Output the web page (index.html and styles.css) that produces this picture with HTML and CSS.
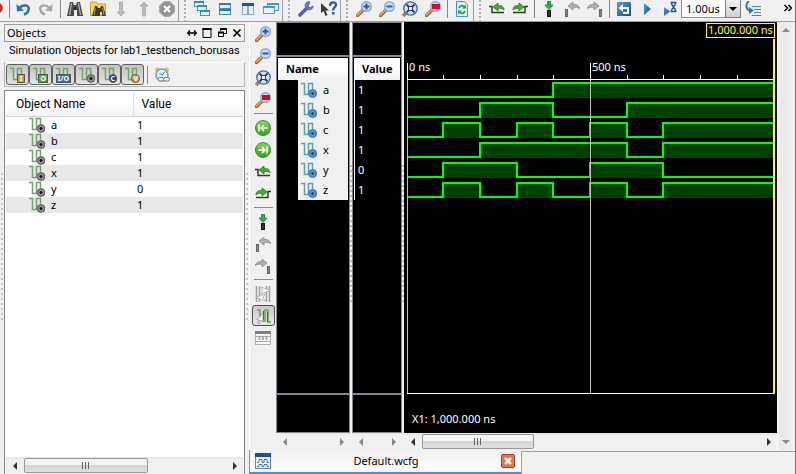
FILE: index.html
```html
<!DOCTYPE html>
<html lang="en">
<head>
<meta charset="utf-8">
<title>Default.wcfg</title>
<link rel="stylesheet" href="styles.css">
</head>
<body>
<svg class="defs" aria-hidden="true">
  <defs>
    <linearGradient id="gGreen" x1="0" y1="0" x2="0" y2="1"><stop offset="0" stop-color="#8ad860"/><stop offset="1" stop-color="#36a01c"/></linearGradient>
    <linearGradient id="gBlue" x1="0" y1="0" x2="1" y2="1"><stop offset="0" stop-color="#5c9ae0"/><stop offset="1" stop-color="#0c489c"/></linearGradient>
  </defs>
  <symbol id="glass" viewBox="0 0 16 16"><path d="M1.500 14.500L7 9" stroke="#a8641c" stroke-width="3.400" stroke-linecap="round"/><path d="M1.500 14L6.500 9" stroke="#e8ae62" stroke-width="1.500" stroke-linecap="round"/><circle cx="10.500" cy="5.500" r="4.800" fill="#c9dafa" stroke="#8aa6e4" stroke-width="1.400"/></symbol>
  <symbol id="zin" viewBox="0 0 16 16"><use href="#glass"/><path d="M7.500 5.500h6M10.500 2.500v6" stroke="#2458a4" stroke-width="1.900"/></symbol>
  <symbol id="zout" viewBox="0 0 16 16"><use href="#glass"/><path d="M7.500 5.500h6" stroke="#2458a4" stroke-width="1.900"/></symbol>
  <symbol id="zfit" viewBox="0 0 16 16"><path d="M1 15L4 12" stroke="#c8781c" stroke-width="3.600"/><circle cx="8.500" cy="7.500" r="6.700" fill="#d4e2fc" stroke="#3c68c0" stroke-width="1.300"/><path d="M4.500 3.500L7 6M12.500 3.500L10 6M4.500 11.500L7 9M12.500 11.500L10 9" stroke="#183c90" stroke-width="1.800"/><rect x="6.500" y="5.500" width="4" height="4" fill="#fff" stroke="#183c90"/></symbol>
  <symbol id="zred" viewBox="0 0 16 16"><use href="#glass"/><rect x="7" y="3" width="8" height="5" fill="#e8001c"/></symbol>
  <symbol id="undo" viewBox="0 0 16 16"><path d="M4 7C10 2 15 5 13.500 9C13 11 11 13 9 13.500" fill="none" stroke="#2e70b8" stroke-width="2.600"/><path d="M1.500 3l.5 7.500 7-1z" fill="#2e70b8"/></symbol>
  <symbol id="redo" viewBox="0 0 16 16"><path d="M12 7C6 2 1 5 2.500 9C3 11 5 13 7 13.500" fill="none" stroke="#a8a8a8" stroke-width="2.400"/><path d="M14.500 3l-.5 7.500-7-1z" fill="#a8a8a8"/></symbol>
  <symbol id="binoc" viewBox="0 0 16 16"><path d="M3 1h3l1 3h2l1-3h3l3 14h-6V9H7v6H0z" fill="#4a4a4a"/><path d="M4.500 2L2.500 14M11.500 2l2 12" stroke="#b8b8b8" stroke-width="1.200"/><path d="M7 6h2v3H7z" fill="#222"/></symbol>
  <symbol id="fbinoc" viewBox="0 0 16 16"><path d="M.5 1h6l1 2h8v11.500h-15z" fill="#f4d95c" stroke="#c4a02c"/><path d="M5 5h2l1 2h2l1-2h2l3 10h-4v-4h-2v4H2z" fill="#413a24"/><path d="M5.500 7L4 14M12.500 7l1.500 7" stroke="#b0a060"/></symbol>
  <symbol id="down" viewBox="0 0 16 16"><path d="M6.500 1h3v10H12l-4 4-4-4h2.500z" fill="#bcbcbc" stroke="#999" stroke-width=".6"/></symbol>
  <symbol id="up" viewBox="0 0 16 16"><path d="M6.500 15h3V5H12L8 1 4 5h2.500z" fill="#bcbcbc" stroke="#999" stroke-width=".6"/></symbol>
  <symbol id="stop" viewBox="0 0 16 16"><path d="M5 .5h6l4.500 4.500v6L11 15.500H5L.5 11V5z" fill="#949494" stroke="#ababab"/><path d="M5 5l6 6M11 5l-6 6" stroke="#fff" stroke-width="2.200"/></symbol>
  <symbol id="casc" viewBox="0 0 16 16"><g fill="#e4f1fc" stroke="#4a92d0"><rect x=".5" y=".5" width="9" height="5"/><rect x="3.500" y="4.500" width="9" height="5"/><rect x="6.500" y="9.500" width="9" height="5"/></g><path d="M0 1h10M3 5h10M6 10h10" stroke="#3c86cc" stroke-width="2"/></symbol>
  <symbol id="tileh" viewBox="0 0 16 16"><g fill="#dfeefc" stroke="#4a8cc8"><rect x="2.500" y="2.500" width="11" height="5"/><rect x="2.500" y="8.500" width="11" height="5"/></g><path d="M2 3h12M2 9h12" stroke="#3478bc" stroke-width="2"/></symbol>
  <symbol id="tilev" viewBox="0 0 16 16"><g fill="#e8f2fc" stroke="#88a8cc"><rect x="2.500" y="2.500" width="5" height="11"/><rect x="8.500" y="2.500" width="5" height="11"/></g><path d="M2 3.500h12" stroke="#1c56a8" stroke-width="3"/></symbol>
  <symbol id="casc2" viewBox="0 0 16 16"><g fill="#e8f6ff" stroke="#50a4dc"><rect x="4.500" y="2.500" width="11" height="7"/><rect x=".5" y="5.500" width="11" height="7"/></g><path d="M4 3h12M0 6h12" stroke="#3c98d8" stroke-width="2"/></symbol>
  <symbol id="wrench" viewBox="0 0 16 16"><path d="M2 14L9 7" stroke="#5c5ca8" stroke-width="3.600" stroke-linecap="round"/><path d="M12 1C8 0 6 4 8 7c2 3 7 2 7-2l-3 2-2-2z" fill="#7878c0" stroke="#5c5ca8"/></symbol>
  <symbol id="whelp" viewBox="0 0 16 16"><path d="M0 2v10l2.500-2 2 5 2-1-2-4.500H8z" fill="#3c3c3c"/><path d="M9 5c0-5 6-4.500 6-1 0 2-3 2.500-3 5.500" fill="none" stroke="#2464a8" stroke-width="2.300"/><rect x="11" y="11" width="2.400" height="2.600" fill="#2464a8"/></symbol>
  <symbol id="refresh" viewBox="0 0 16 16"><path d="M2.500 .5h8l3 3v12h-11z" fill="#dcecfc" stroke="#4c90d4"/><path d="M5 7c1-3 4-3 6-1M11 10c-1 3-4 3-6 1" fill="none" stroke="#28a428" stroke-width="1.700"/><path d="M12 3.500v4H8zM4 13.500v-4h4z" fill="#28a428"/></symbol>
  <symbol id="goL" viewBox="0 0 16 16"><path d="M0 5.500h3v6h12" fill="none" stroke="#333" stroke-width="1.500"/><path d="M4 6l5-4v2.500c4-.5 6 1.500 6 4.500-2-2-4-2-6-1.500V10z" fill="#48ac30" stroke="#217a18" stroke-width=".8"/></symbol>
  <symbol id="goR" viewBox="0 0 16 16"><path d="M16 5.500h-3v6H1" fill="none" stroke="#333" stroke-width="1.500"/><path d="M12 6L7 2v2.500C3 4 1 6 1 9c2-2 4-2 6-1.500V10z" fill="#48ac30" stroke="#217a18" stroke-width=".8"/></symbol>
  <symbol id="mark" viewBox="0 0 16 16"><path d="M6.500 0h3v4H12L8 8.500 4 4h2.500z" fill="#30ac48" stroke="#207830" stroke-width=".8"/><rect x="6.500" y="9.500" width="3" height="6" fill="#333" stroke="#111"/></symbol>
  <symbol id="mL" viewBox="0 0 16 16"><rect x="1.500" y="8.500" width="2" height="7" fill="#888" stroke="#666"/><path d="M4 5l5-4v2.500c4-.5 6 1.500 7 4-3-1.500-4.500-1.500-7-1V9z" fill="#b0b0b0" stroke="#8c8c8c" stroke-width=".8"/></symbol>
  <symbol id="mR" viewBox="0 0 16 16"><rect x="12.500" y="8.500" width="2" height="7" fill="#888" stroke="#666"/><path d="M12 5L7 1v2.500C3 3 1 5 0 7.500 3 6 4.500 6 7 6.500V9z" fill="#b0b0b0" stroke="#8c8c8c" stroke-width=".8"/></symbol>
  <symbol id="restart" viewBox="0 0 16 16"><rect x="1" y="1" width="14" height="14" rx="1" fill="url(#gBlue)"/><path d="M4 7h8v5H7" fill="none" stroke="#fff" stroke-width="2"/><path d="M7 3v8L2.500 7z" fill="#fff"/></symbol>
  <symbol id="run" viewBox="0 0 16 16"><path d="M5 2l7 6-7 6z" fill="url(#gBlue)"/></symbol>
  <symbol id="runfor" viewBox="0 0 16 16"><path d="M2 6l6 4.500L2 15z" fill="url(#gBlue)"/><path d="M8.500 1.500h6M8.500 10.500h6M9.500 2c0 3 4 5 4 8M13.500 2c0 3-4 5-4 8" fill="none" stroke="#28588c" stroke-width="1.500"/></symbol>
  <symbol id="step" viewBox="0 0 16 16"><path d="M7 5.500h9M9 8.500h7M9 11.500h7M7 14.500h9" stroke="#4c7fb8"/><path d="M4 0C0 3 1 9 5 9.500" fill="none" stroke="#2878bc" stroke-width="2"/><path d="M4 6v7l5-3.500z" fill="#2878bc"/></symbol>
  <symbol id="gFirst" viewBox="0 0 16 16"><circle cx="8" cy="8" r="7.500" fill="url(#gGreen)" stroke="#3c9020"/><path d="M4 4.500v7M12.500 8H6M9 5L6 8l3 3" fill="none" stroke="#fff" stroke-width="1.500"/></symbol>
  <symbol id="gLast" viewBox="0 0 16 16"><circle cx="8" cy="8" r="7.500" fill="url(#gGreen)" stroke="#3c9020"/><path d="M12 4.500v7M3.500 8H10M7 5l3 3-3 3" fill="none" stroke="#fff" stroke-width="1.500"/></symbol>
  <symbol id="swap" viewBox="0 0 16 16"><path d="M1.500 0v16M4.500 0v16M11.500 0v16M14.500 0v16" stroke="#a0a0a0" stroke-width="1.500"/><path d="M6 1l9 3.500L6 8l2-3.500zM10 8l-9 3.500L10 15l-2-3.500z" fill="#fff" stroke="#a8a8a8" stroke-width=".8"/></symbol>
  <symbol id="snap" viewBox="0 0 16 16"><path d="M2 2h3v11M7 13h3V2h3v12h3" fill="none" stroke="#68a848" stroke-width="1.500"/><path d="M8.500 3v9M12.500 4v10" stroke="#555" stroke-width="1"/><path d="M8 5v9l-2-2-2 4-1.500-1 2-3H2z" fill="#fff" stroke="#888" stroke-width=".7"/></symbol>
  <symbol id="panel" viewBox="0 0 16 16"><rect x=".5" y="1.500" width="15" height="13" fill="#f8f8f8" stroke="#b0b0b0"/><path d="M0 2.500h16" stroke="#808080" stroke-width="3"/><path d="M1 6.500h14M1 11.500h14" stroke="#aaa"/><path d="M4.500 7v3M8 7v3M11.500 7v3" stroke="#aaa" stroke-width="2"/></symbol>
  <symbol id="sig" viewBox="0 0 16 16"><path d="M0 1.500h3.500v11h4v-11h4v6" fill="none" stroke="#6ca862" stroke-width="1.500"/></symbol>
  <symbol id="sigdot" viewBox="0 0 16 16"><use href="#sig"/><circle cx="12" cy="11.500" r="3.900" fill="#909090" stroke="#484848" stroke-width=".8"/><path d="M12 10v3M10.500 11.500h3" stroke="#111" stroke-width="1.400"/></symbol>
  <symbol id="sigblue" viewBox="0 0 16 16"><path d="M0 1.500h3.500v11h4v-11h4v6" fill="none" stroke="#58a4b4" stroke-width="1.500"/><circle cx="11.700" cy="11.500" r="4" fill="#5494d0" stroke="#2c6098" stroke-width=".8"/><path d="M11.700 10v3M10.200 11.500h3" stroke="#164474" stroke-width="1.400"/></symbol>
  <symbol id="clock" viewBox="0 0 16 16"><circle cx="3.500" cy="3" r="2.500" fill="#f4bc48"/><circle cx="12.500" cy="3" r="2.500" fill="#f4bc48"/><circle cx="8" cy="8" r="6" fill="#e0f2fc" stroke="#60acd8" stroke-width="1.600"/><path d="M5.500 6L8 8.500 11 4.500" fill="none" stroke="#486c88"/><g fill="#eee" stroke="#787878"><rect x="4" y="10.500" width="6" height="3.500" rx="1.700"/><rect x="9.500" y="10.500" width="6" height="3.500" rx="1.700"/></g></symbol>
  <symbol id="wcfg" viewBox="0 0 16 16"><rect x=".5" y=".5" width="15" height="15" fill="#fff" stroke="#5c80c0"/><path d="M0 2h16" stroke="#1450a4" stroke-width="4"/><path d="M2 9.500h2v-3h3v3h2v-3h3v3h2M2 13.500h2v-2h3v2h2v-2h3v2h2" fill="none" stroke="#3c68e0"/></symbol>
</svg>

<header class="toolbar">
  <span class="record"></span>
  <button class="tool" aria-label="Undo"><svg><use href="#undo"/></svg></button>
  <button class="tool" aria-label="Redo"><svg><use href="#redo"/></svg></button>
  <span class="sep"></span>
  <button class="tool" aria-label="Find"><svg><use href="#binoc"/></svg></button>
  <button class="tool" aria-label="Find in files"><svg><use href="#fbinoc"/></svg></button>
  <button class="tool" aria-label="Find next"><svg><use href="#down"/></svg></button>
  <button class="tool" aria-label="Find previous"><svg><use href="#up"/></svg></button>
  <button class="tool" aria-label="Stop"><svg><use href="#stop"/></svg></button>
  <span class="grip"></span>
  <button class="tool" aria-label="Cascade"><svg><use href="#casc"/></svg></button>
  <button class="tool" aria-label="Tile horizontally"><svg><use href="#tileh"/></svg></button>
  <button class="tool" aria-label="Tile vertically"><svg><use href="#tilev"/></svg></button>
  <button class="tool" aria-label="Float window"><svg><use href="#casc2"/></svg></button>
  <span class="grip"></span>
  <button class="tool" aria-label="Preferences"><svg><use href="#wrench"/></svg></button>
  <button class="tool" aria-label="What's this"><svg><use href="#whelp"/></svg></button>
  <span class="grip"></span>
  <button class="tool" aria-label="Zoom in"><svg><use href="#zin"/></svg></button>
  <button class="tool" aria-label="Zoom out"><svg><use href="#zout"/></svg></button>
  <button class="tool" aria-label="Zoom to full view"><svg><use href="#zfit"/></svg></button>
  <button class="tool" aria-label="Zoom to cursor"><svg><use href="#zred"/></svg></button>
  <span class="sep"></span>
  <button class="tool" aria-label="Refresh"><svg><use href="#refresh"/></svg></button>
  <span class="grip"></span>
  <button class="tool" aria-label="Previous transition"><svg><use href="#goL"/></svg></button>
  <button class="tool" aria-label="Next transition"><svg><use href="#goR"/></svg></button>
  <span class="sep"></span>
  <button class="tool" aria-label="Add marker"><svg><use href="#mark"/></svg></button>
  <button class="tool" aria-label="Previous marker"><svg><use href="#mL"/></svg></button>
  <button class="tool" aria-label="Next marker"><svg><use href="#mR"/></svg></button>
  <span class="sep"></span>
  <button class="tool" aria-label="Restart"><svg><use href="#restart"/></svg></button>
  <button class="tool" aria-label="Run all"><svg><use href="#run"/></svg></button>
  <button class="tool" aria-label="Run for time"><svg><use href="#runfor"/></svg></button>
  <span class="combo"><select aria-label="Run time"><option>1.00us</option></select><span class="drop"></span></span>
  <button class="tool" aria-label="Step"><svg><use href="#step"/></svg></button>
  <button class="more" aria-label="More tools"><svg viewBox="0 0 8 8"><path d="M0.500 1l3 3-3 3M4.500 1l3 3-3 3" fill="none" stroke="#000" stroke-width="1.500"/></svg></button>
</header>

<main class="workspace">
  <div class="dots"></div>
  <section class="objects">
    <div class="titlebar">
      <h2>Objects</h2>
      <button aria-label="Move"><svg viewBox="0 0 10 10"><path d="M1 5h8M3 2.500L.7 5 3 7.500M7 2.500L9.300 5 7 7.500" fill="none" stroke="#000" stroke-width="1.300"/></svg></button>
      <button aria-label="Maximize"><svg viewBox="0 0 10 10"><path d="M1 .5v9h8v-9z" fill="none" stroke="#000"/><path d="M.5 1h9" stroke="#000" stroke-width="2"/></svg></button>
      <button aria-label="Restore"><svg viewBox="0 0 10 10"><path d="M3.500 3V1.500h6v4H7M1.500 4.500h5v4h-5z" fill="none" stroke="#000"/><path d="M3 1h7M1 4.500h6" stroke="#000" stroke-width="2"/></svg></button>
      <button aria-label="Close"><svg viewBox="0 0 10 10"><path d="M1.500 1.500l7 7M8.500 1.500l-7 7" stroke="#000" stroke-width="1.700"/></svg></button>
    </div>
    <p class="caption">Simulation Objects for lab1_testbench_borusas</p>
    <div class="filters">
      <button class="filter" aria-label="Inputs"><svg><use href="#sig"/></svg><span class="tag gold">I</span></button>
      <button class="filter" aria-label="Outputs"><svg><use href="#sig"/></svg><span class="tag green">O</span></button>
      <button class="filter" aria-label="Bidirectional"><svg><use href="#sig"/></svg><span class="tag blue">I/O</span></button>
      <button class="filter" aria-label="Internal"><svg><use href="#sigdot"/></svg></button>
      <button class="filter" aria-label="Constants"><svg><use href="#sig"/></svg><span class="tag navy">C</span></button>
      <button class="filter" aria-label="Variables"><svg><use href="#sig"/></svg><span class="tag amber">V</span></button>
      <span class="sep"></span>
      <button class="tool" aria-label="Link to time"><svg><use href="#clock"/></svg></button>
    </div>
    <div class="treebox">
      <table>
        <thead><tr><th>Object Name</th><th>Value</th></tr></thead>
        <tbody>
          <tr><td><svg><use href="#sigdot"/></svg>a</td><td>1</td></tr>
          <tr><td><svg><use href="#sigdot"/></svg>b</td><td>1</td></tr>
          <tr><td><svg><use href="#sigdot"/></svg>c</td><td>1</td></tr>
          <tr><td><svg><use href="#sigdot"/></svg>x</td><td>1</td></tr>
          <tr><td><svg><use href="#sigdot"/></svg>y</td><td>0</td></tr>
          <tr><td><svg><use href="#sigdot"/></svg>z</td><td>1</td></tr>
        </tbody>
      </table>
      <div class="hscroll"><span class="arrow left"></span><span class="track"><span class="thumb objthumb"></span></span><span class="arrow right"></span></div>
    </div>
  </section>
  <div class="dots"></div>

  <section class="document">
    <div class="editor">
      <nav class="sidebar">
        <button class="tool" aria-label="Zoom in"><svg><use href="#zin"/></svg></button>
        <button class="tool" aria-label="Zoom out"><svg><use href="#zout"/></svg></button>
        <button class="tool" aria-label="Zoom to full view"><svg><use href="#zfit"/></svg></button>
        <button class="tool" aria-label="Zoom to cursor"><svg><use href="#zred"/></svg></button>
        <span class="rule"></span>
        <button class="tool" aria-label="Go to start"><svg><use href="#gFirst"/></svg></button>
        <button class="tool" aria-label="Go to end"><svg><use href="#gLast"/></svg></button>
        <button class="tool" aria-label="Previous transition"><svg><use href="#goL"/></svg></button>
        <button class="tool" aria-label="Next transition"><svg><use href="#goR"/></svg></button>
        <span class="rule"></span>
        <button class="tool" aria-label="Add marker"><svg><use href="#mark"/></svg></button>
        <button class="tool" aria-label="Previous marker"><svg><use href="#mL"/></svg></button>
        <button class="tool" aria-label="Next marker"><svg><use href="#mR"/></svg></button>
        <span class="rule"></span>
        <button class="tool" aria-label="Swap cursors"><svg><use href="#swap"/></svg></button>
        <button class="tool pressed" aria-label="Snap to transition"><svg><use href="#snap"/></svg></button>
        <button class="tool" aria-label="Floating ruler"><svg><use href="#panel"/></svg></button>
      </nav>

      <div class="column names">
        <div class="black">
          <div class="spacer"></div>
          <h3>Name</h3>
          <ul>
            <li><svg><use href="#sigblue"/></svg>a</li>
            <li><svg><use href="#sigblue"/></svg>b</li>
            <li><svg><use href="#sigblue"/></svg>c</li>
            <li><svg><use href="#sigblue"/></svg>x</li>
            <li><svg><use href="#sigblue"/></svg>y</li>
            <li><svg><use href="#sigblue"/></svg>z</li>
          </ul>
          <div class="footer"></div>
        </div>
        <div class="hscroll idle"><span class="arrow left"></span><span class="track"></span><span class="arrow right"></span></div>
      </div>
      <div class="splitter"></div>
      <div class="column values">
        <div class="black">
          <div class="spacer"></div>
          <h3>Value</h3>
          <ul><li>1</li><li>1</li><li>1</li><li>1</li><li>0</li><li>1</li></ul>
          <div class="footer"></div>
        </div>
        <div class="hscroll idle"><span class="arrow left"></span><span class="track"></span><span class="arrow right"></span></div>
      </div>
      <div class="splitter"></div>
      <div class="waves">
        <svg class="plot" role="img" aria-label="Waveforms of a, b, c, x, y and z">
          <g class="fills">
            <path d="M149 61h220v15h-220z"/>
            <path d="M76 81h73v15h-73zM223 81h146v15h-146z"/>
            <path d="M39 101h37v15h-37zM113 101h36v15h-36zM186 101h37v15h-37zM259 101h110v15h-110z"/>
            <path d="M76 121h147v15h-147zM259 121h110v15h-110z"/>
            <path d="M39 141h74v15h-74zM186 141h73v15h-73z"/>
            <path d="M39 161h37v15h-37zM113 161h36v15h-36zM186 161h37v15h-37zM259 161h110v15h-110z"/>
          </g>
          <g class="traces">
            <path d="M4 75H149V61H369"/>
            <path d="M4 95H76V81H149V95H223V81H369"/>
            <path d="M4 115H39V101H76V115H113V101H149V115H186V101H223V115H259V101H369"/>
            <path d="M4 135H76V121H223V135H259V121H369"/>
            <path d="M4 155H39V141H113V155H186V141H259V155H369"/>
            <path d="M4 175H39V161H76V175H113V161H149V175H186V161H223V175H259V161H369"/>
          </g>
          <path class="cursor" d="M3.500 41V371M186.500 41V371"/>
          <path class="axis" d="M3 57.500H369M3.500 41V58M186.500 41V58M39.500 53V57M76.500 53V57M113.500 53V57M149.500 53V57M223.500 53V57M259.500 53V57M296.500 53V57M333.500 53V57M3 371.500H369"/>
          <path class="marker" d="M370 17V372"/>
          <rect class="flag" x="302.500" y="1.500" width="68" height="14"/>
          <text class="flagtext" x="304" y="12">1,000.000 ns</text>
          <text x="5" y="49">0 ns</text>
          <text x="188" y="49">500 ns</text>
          <text x="8" y="401">X1: 1,000.000 ns</text>
        </svg>
        <div class="hscroll"><span class="arrow left"></span><span class="track"><span class="thumb wavethumb"></span></span><span class="arrow right"></span></div>
      </div>
      <div class="vscroll"><span class="arrow up"></span><span class="arrow down"></span></div>
    </div>
    <div class="tabs">
      <div class="tab"><svg><use href="#wcfg"/></svg><a href="#">Default.wcfg</a><button aria-label="Close tab"><svg viewBox="0 0 10 10"><path d="M2 2l6 6M8 2l-6 6" stroke="#fff" stroke-width="2.400"/></svg></button></div>
      <div class="tabrest"></div>
    </div>
  </section>
</main>
</body>
</html>
```
FILE: styles.css
```css
* { box-sizing: border-box; }
body {
  margin: 0;
  height: 100vh;
  display: flex;
  flex-direction: column;
  overflow: hidden;
  background: #f0f0f0;
  border-right: 1px solid #707070;
  color: #000;
  font: 11px/14px "Noto Sans", "Open Sans", sans-serif;
}
h2, h3, p, ul { margin: 0; padding: 0; font: inherit; }
ul { list-style: none; }
button { margin: 0; padding: 0; border: 0; background: none; font: inherit; }
svg { display: block; width: 16px; height: 16px; flex: none; }
.defs { position: absolute; width: 0; height: 0; }

.toolbar {
  flex: none;
  height: 22px;
  display: flex;
  align-items: flex-start;
  border-bottom: 1px solid #a0a0a0;
}
.tool {
  flex: none;
  width: 23px;
  height: 17px;
  display: flex;
  align-items: center;
  justify-content: center;
}
.record {
  flex: none;
  width: 11px;
  height: 18px;
  background: radial-gradient(circle at -3px 8px, #e81818 5px, transparent 6px), linear-gradient(90deg, transparent 9px, #888 9px, #888 10px, transparent 10px);
}
.sep { flex: none; width: 6px; height: 18px; background: linear-gradient(90deg, transparent 3px, #888 3px, #888 4px, transparent 4px); }
.grip {
  flex: none;
  width: 12px;
  height: 21px;
  border-left: 1px solid #a0a0a0;
  background: repeating-linear-gradient(180deg, #b0b0b0 0 2px, #f0f0f0 2px 4px) 5px 0 / 2px 100% no-repeat;
}
.combo { position: relative; width: 60px; height: 18px; flex: none; }
.combo select {
  appearance: none;
  width: 100%;
  height: 100%;
  padding: 0 0 0 4px;
  border: 1px solid #909090;
  border-top: 0;
  border-radius: 0;
  background: #fff;
  color: #000;
  font: 11px/16px "Noto Sans", sans-serif;
}
.drop {
  position: absolute;
  right: 0;
  top: 0;
  width: 16px;
  height: 18px;
  display: grid;
  place-items: center;
  border: 1px solid #808080;
  border-top: 0;
  background: linear-gradient(#f2f2f2, #cfcfcf);
  pointer-events: none;
}
.drop::after { content: ""; border: 4px solid transparent; border-top-color: #000; border-bottom: 0; }
.more { margin-left: auto; padding: 4px 3px; }
.more svg { width: 8px; height: 8px; }

.workspace { flex: 1; min-height: 0; display: flex; }
.dots {
  flex: none;
  width: 4px;
  background: repeating-linear-gradient(180deg, #c8c8c8 0 2px, #f4f4f4 2px 5px) 1px 151px / 2px 148px no-repeat;
}

.objects {
  flex: 0 0 241px;
  min-width: 0;
  display: flex;
  flex-direction: column;
  padding-top: 2px;
}
.titlebar {
  flex: none;
  height: 18px;
  display: flex;
  align-items: center;
  gap: 5px;
  padding: 0 2px;
  border: 1px solid #a0a0a0;
}
.titlebar h2 { flex: 1; }
.titlebar svg { width: 10px; height: 10px; }
.caption {
  height: 20px;
  padding: 2px 0 0 5px;
  white-space: nowrap;
  font-family: Roboto, "Noto Sans", sans-serif;
}
.filters {
  flex: none;
  height: 25px;
  display: flex;
  align-items: center;
  padding: 0 1px;
  border: 1px solid #b4b4b4;
  border-top-color: #fcfcfc;
}
.filter {
  position: relative;
  width: 23px;
  height: 21px;
  padding: 1px 3px;
  border: 1px solid #606060;
  border-radius: 3px;
  background: linear-gradient(#c4c4c4, #e4e4e4);
}
.tag {
  position: absolute;
  right: 3px;
  bottom: 1px;
  min-width: 8px;
  padding: 0 1px;
  border: 1px solid #555;
  color: #fff;
  font: bold 7px/7px "Noto Sans", sans-serif;
}
.gold { background: #d89c18; }
.green { background: #5ca83c; }
.blue { background: #3474b8; }
.navy { background: #1c4494; border-radius: 5px; }
.amber { background: #e0a824; border-radius: 5px; }

.treebox {
  flex: 1;
  min-height: 0;
  margin-top: 3px;
  display: flex;
  flex-direction: column;
  justify-content: space-between;
  padding: 1px 1px 0;
  border: 1px solid #828790;
  border-bottom: 0;
  background: #fff;
}
table { width: 100%; border-collapse: collapse; table-layout: fixed; }
th {
  height: 24px;
  padding: 0 0 0 8px;
  text-align: left;
  font: 12px/16px Roboto, "Noto Sans", sans-serif;
  background: linear-gradient(#fff 40%, #f2f3f5);
  border-bottom: 1px solid #d5d5d5;
}
th:first-child { width: 127px; padding-left: 10px; border-right: 1px solid #e0e0e0; }
td { height: 16px; padding: 0 0 0 4px; line-height: 16px; }
td:first-child { display: flex; padding-left: 23px; gap: 6px; }
tbody tr:nth-child(even) { background: #e8e8e8; }

.hscroll { flex: none; height: 17px; display: flex; align-items: center; background: linear-gradient(#e4e4e4, #f0f0f0 3px); }
.arrow { flex: none; width: 17px; display: grid; place-items: center; }
.arrow::after { content: ""; border: 4px solid transparent; }
.left::after { border-right-color: #333; border-left: 0; }
.right::after { border-left-color: #333; border-right: 0; }
.up::after { border-bottom-color: #888; border-top: 0; }
.down::after { border-top-color: #888; border-bottom: 0; }
.idle .left::after { border-right-color: #888; }
.idle .right::after { border-left-color: #888; }
.track { flex: 1; display: flex; }
.thumb {
  height: 15px;
  border: 1px solid #989898;
  border-radius: 2px;
  background:
    repeating-linear-gradient(90deg, #666 0 1px, transparent 1px 3px) center / 8px 7px no-repeat,
    linear-gradient(#f4f4f4 45%, #d6d6d6 50%, #e0e0e0);
}
.objthumb { width: 61%; margin-left: 1px; }
.wavethumb { width: 33%; margin-left: 1px; }

.document { flex: 1; min-width: 0; display: flex; flex-direction: column; }
.editor { flex: 1; min-height: 0; display: flex; }
.sidebar {
  flex: none;
  width: 27px;
  display: flex;
  flex-direction: column;
  align-items: center;
  gap: 5px;
  padding-top: 3px;
  border-left: 1px solid #fff;
}
.rule { flex: none; width: 19px; height: 1px; background: #888; }
.pressed { height: 21px; margin: -2px 0; border: 1px solid #505050; border-radius: 3px; background: linear-gradient(#c8c8c8, #e8e8e8); }

.column { flex: none; display: flex; flex-direction: column; }
.names { width: 74px; }
.values { width: 50px; }
.black {
  flex: 1;
  display: flex;
  flex-direction: column;
  background: #000;
  border: 1px solid #828790;
}
.spacer { height: 34px; border-bottom: 2px solid #828790; }
.black h3 {
  height: 22px;
  margin: 1px 1px 0;
  padding: 3px 0 0 8px;
  font: bold 11px/16px "Noto Sans", sans-serif;
  background: linear-gradient(#fff 45%, #f0f1f3);
}
.black li { height: 20px; display: flex; align-items: center; line-height: 16px; }
.names ul { margin: 0 1px 0 21px; background: #f0f0f0; }
.names li { gap: 6px; padding-left: 3px; }
.values ul { margin-left: 1px; border-left: 1px solid #fff; color: #fff; }
.values li { padding-left: 3px; }
.footer { margin-top: auto; height: 39px; border-top: 2px solid #828790; }
.splitter {
  flex: none;
  width: 2px;
  background: repeating-linear-gradient(180deg, #c0c0c0 0 2px, #f4f4f4 2px 5px) 0 143px / 2px 137px no-repeat #f0f0f0;
}
.waves { flex: 1; min-width: 0; display: flex; flex-direction: column; }
.plot { flex: 1; width: 100%; min-height: 0; background: #000; }
.plot text { fill: #fff; font: 11px "Noto Sans", sans-serif; }
.plot .flagtext { fill: #ff0; }
.plot path, .flag { fill: none; shape-rendering: crispEdges; }
.plot .fills path { fill: #004000; }
.traces path { stroke: #0f0; stroke-width: 2; }
.cursor { stroke: #c0c0c0; }
.axis { stroke: #fff; }
.marker { stroke: #ff0; stroke-width: 2; }
.flag { stroke: #ff0; }
.vscroll {
  flex: none;
  width: 18px;
  display: flex;
  flex-direction: column;
  justify-content: space-between;
  padding: 6px 0;
  background: linear-gradient(90deg, #f8f8f8, #e8e8e8 3px, #f0f0f0);
}

.tabs { flex: none; height: 24px; display: flex; }
.tab {
  flex: 0 0 272px;
  display: flex;
  align-items: center;
  gap: 8px;
  padding: 0 6px 0 5px;
  border-left: 1px solid #909090;
  border-bottom: 2px solid #3096f8;
  background: linear-gradient(#f0f0f0, #fff);
}
.tab a { flex: 1; text-align: center; color: #000; text-decoration: none; }
.tab button { width: 14px; height: 14px; display: grid; place-items: center; border: 1px solid #b03c20; border-radius: 2px; background: #e07850; }
.tab button svg { width: 10px; height: 10px; }
.tabrest { flex: 1; margin-top: 1px; border-top: 1px solid #a0a0a0; border-left: 1px solid #a0a0a0; }
```
